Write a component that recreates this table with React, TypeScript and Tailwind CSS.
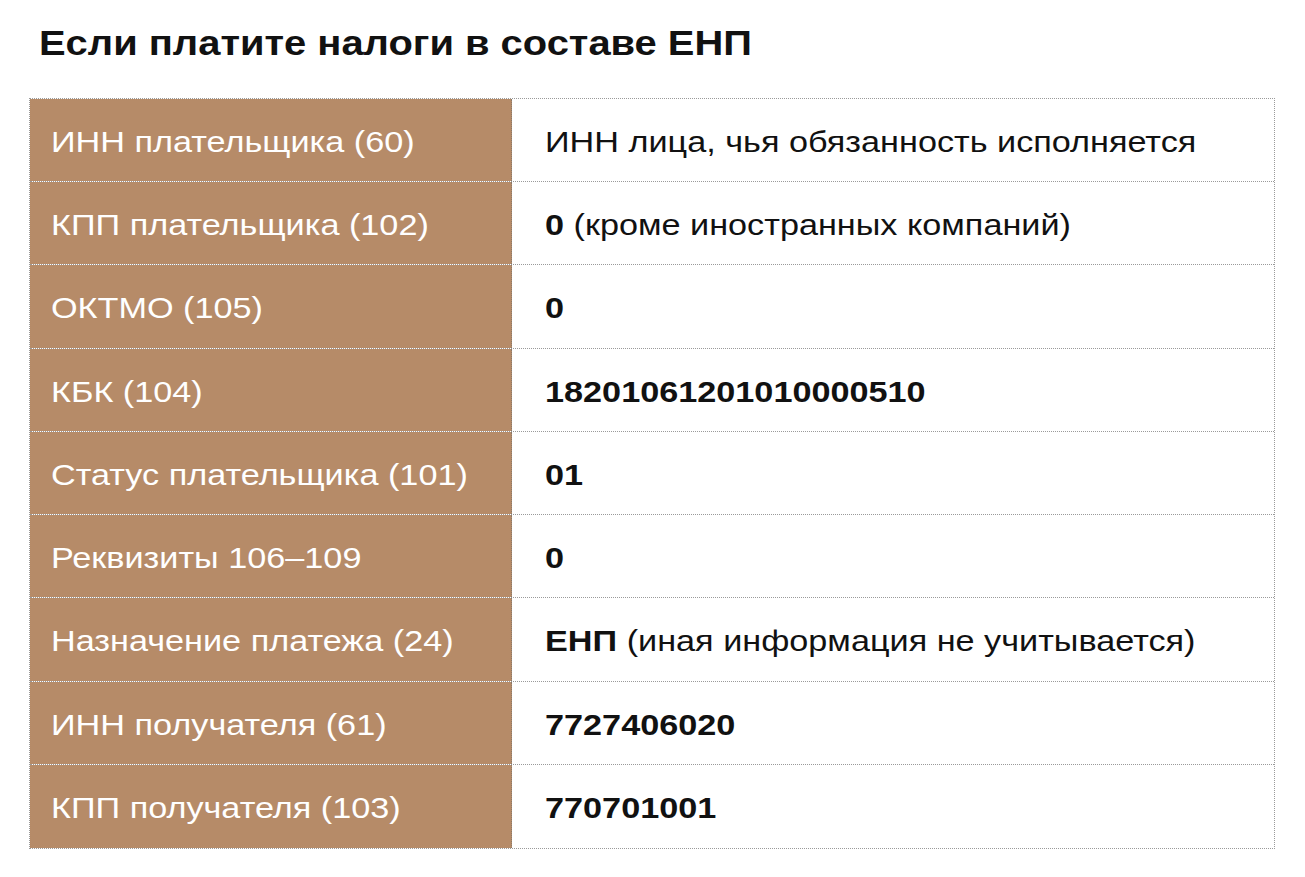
import React from "react";

type Row = { label: string; value: React.ReactNode; tall?: boolean };

const rows: Row[] = [
  { label: "ИНН плательщика (60)", value: <span>ИНН лица, чья обязанность исполняется</span> },
  { label: "КПП плательщика (102)", value: <span><b className="font-bold">0</b> (кроме иностранных компаний)</span> },
  { label: "ОКТМО (105)", value: <b className="font-bold">0</b>, tall: true },
  { label: "КБК (104)", value: <b className="font-bold">18201061201010000510</b> },
  { label: "Статус плательщика (101)", value: <b className="font-bold">01</b> },
  { label: "Реквизиты 106–109", value: <b className="font-bold">0</b> },
  { label: "Назначение платежа (24)", value: <span><b className="font-bold">ЕНП</b> (иная информация не учитывается)</span>, tall: true },
  { label: "ИНН получателя (61)", value: <b className="font-bold">7727406020</b> },
  { label: "КПП получателя (103)", value: <b className="font-bold">770701001</b> },
];

export default function App() {
  return (
    <div className="min-h-[877px] w-[1305px] bg-white pt-[25px] font-['Liberation_Sans',Arial,sans-serif]">
      <h1 className="pl-[39px] text-[35px] font-bold leading-none text-[#111]">
        <span className="inline-block origin-left scale-x-[1.14]">Если платите налоги в составе ЕНП</span>
      </h1>
      <div className="ml-[29px] mt-[38px] w-[1246px] border border-dotted border-[#9a9a9a]">
        {rows.map((r, i) => (
          <div
            key={i}
            className={`flex ${r.tall ? "h-[84px]" : "h-[83px]"} ${i === rows.length - 1 ? "" : "border-b border-dotted border-[#9a9a9a]"}`}
          >
            <div className="flex w-[482px] shrink-0 items-center border-r border-dotted border-[#8a7a6a] bg-[#b68b68] pt-[4px] pl-[21px] text-[29px] leading-none text-white">
              <span className="inline-block origin-left scale-x-[1.18] whitespace-nowrap">{r.label}</span>
            </div>
            <div className="flex flex-1 items-center pt-[4px] pl-[33px] text-[29px] leading-none text-[#111]">
              <span className="inline-block origin-left scale-x-[1.18] whitespace-nowrap">{r.value}</span>
            </div>
          </div>
        ))}
      </div>
    </div>
  );
}
